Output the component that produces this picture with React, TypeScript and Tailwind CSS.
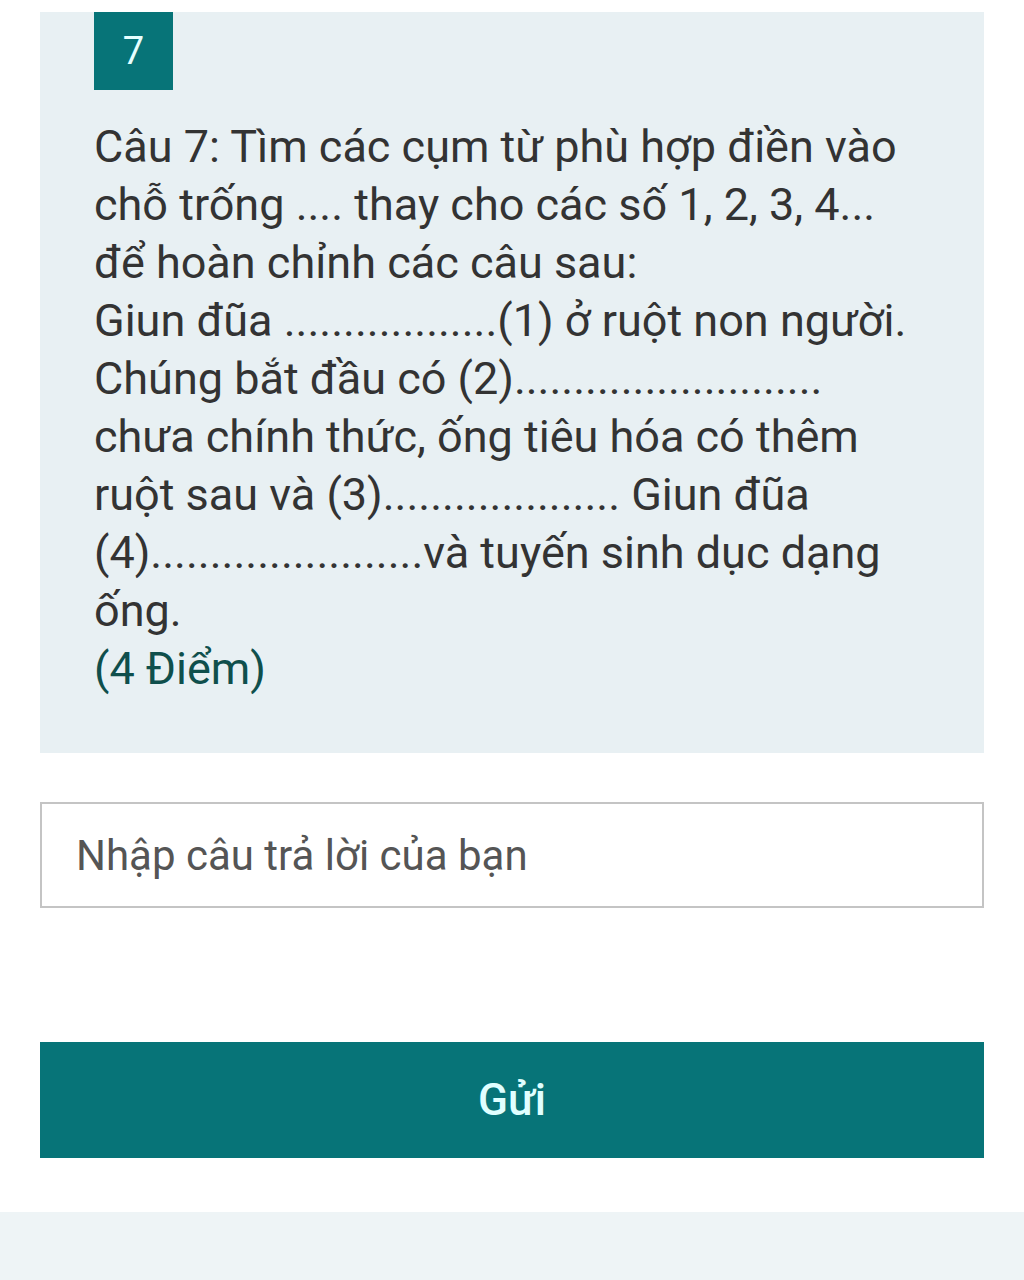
const dots = (n: number) => ".".repeat(n);

const lines = [
  "Câu 7: Tìm các cụm từ phù hợp điền vào",
  "chỗ trống .... thay cho các số 1, 2, 3, 4...",
  "để hoàn chỉnh các câu sau:",
  `Giun đũa ${dots(18)}(1) ở ruột non người.`,
  `Chúng bắt đầu có (2)${dots(26)}`,
  "chưa chính thức, ống tiêu hóa có thêm",
  `ruột sau và (3)${dots(20)} Giun đũa`,
  `(4)${dots(23)}và tuyến sinh dục dạng`,
  "ống.",
];

export default function App() {
  return (
    <div className="w-[1024px] h-[1280px] bg-white flex flex-col font-['Roboto',sans-serif]">
      <div className="pt-3 px-10">
        <div className="bg-[#e8f0f3] pl-[54px] pr-10 pb-[55px]">
          <div className="w-[79px] h-[78px] bg-[#077478] flex items-center justify-center text-[38px] text-[#e6ffff]">
            7
          </div>
          <div className="mt-7 text-[45px] leading-[58px] text-[#333] whitespace-nowrap">
            {lines.map((l, i) => (
              <div key={i}>{l}</div>
            ))}
            <div className="text-[#0f4f4c]">(4 Điểm)</div>
          </div>
        </div>
      </div>

      <div className="px-10 mt-[49px]">
        <div className="h-[106px] border-2 border-[#c4c4c4] bg-white flex items-center pl-[34px] text-[42px] text-[#555]">
          Nhập câu trả lời của bạn
        </div>
      </div>

      <div className="px-10 mt-[134px]">
        <button className="w-full h-[116px] bg-[#077478] text-[#e0ffff] text-[44px] font-medium">
          Gửi
        </button>
      </div>

      <div className="mt-auto h-[68px] bg-[#eef4f6]" />
    </div>
  );
}
